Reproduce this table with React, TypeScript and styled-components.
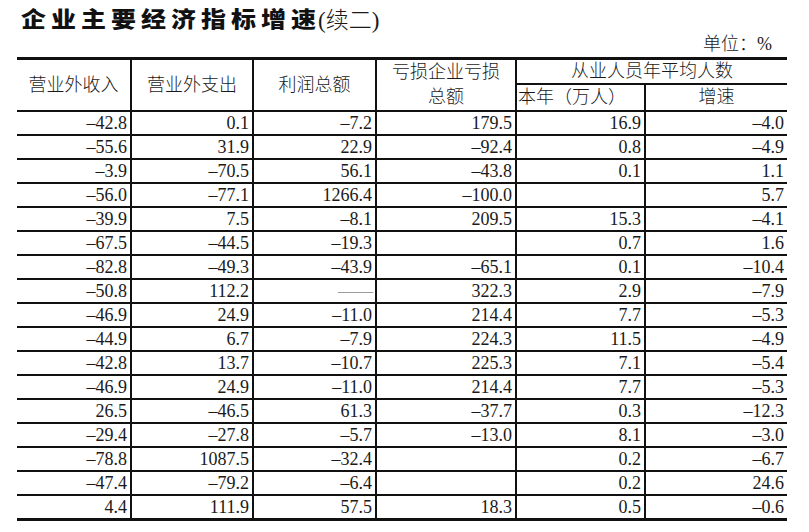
import React from "react";
import styled, { createGlobalStyle } from "styled-components";

const GlobalStyle = createGlobalStyle`
  html, body {
    margin: 0;
    padding: 0;
    background: #fff;
  }
  body {
    font-family: "Liberation Serif", "Noto Sans CJK SC", serif;
    color: #1a1a1a;
  }
`;

type Cell = string;

const rows: Cell[][] = [
  ["–42.8", "0.1", "–7.2", "179.5", "16.9", "–4.0"],
  ["–55.6", "31.9", "22.9", "–92.4", "0.8", "–4.9"],
  ["–3.9", "–70.5", "56.1", "–43.8", "0.1", "1.1"],
  ["–56.0", "–77.1", "1266.4", "–100.0", "", "5.7"],
  ["–39.9", "7.5", "–8.1", "209.5", "15.3", "–4.1"],
  ["–67.5", "–44.5", "–19.3", "", "0.7", "1.6"],
  ["–82.8", "–49.3", "–43.9", "–65.1", "0.1", "–10.4"],
  ["–50.8", "112.2", "——", "322.3", "2.9", "–7.9"],
  ["–46.9", "24.9", "–11.0", "214.4", "7.7", "–5.3"],
  ["–44.9", "6.7", "–7.9", "224.3", "11.5", "–4.9"],
  ["–42.8", "13.7", "–10.7", "225.3", "7.1", "–5.4"],
  ["–46.9", "24.9", "–11.0", "214.4", "7.7", "–5.3"],
  ["26.5", "–46.5", "61.3", "–37.7", "0.3", "–12.3"],
  ["–29.4", "–27.8", "–5.7", "–13.0", "8.1", "–3.0"],
  ["–78.8", "1087.5", "–32.4", "", "0.2", "–6.7"],
  ["–47.4", "–79.2", "–6.4", "", "0.2", "24.6"],
  ["4.4", "111.9", "57.5", "18.3", "0.5", "–0.6"],
];

const colWidths = [115, 122, 123, 140, 129, 141];

export default function App() {
  return (
    <Page>
      <GlobalStyle />
      <Title>
        <TitleMain>企业主要经济指标增速</TitleMain>
        <TitleNote>(续二)</TitleNote>
      </Title>
      <Unit>单位：%</Unit>
      <Table>
        <colgroup>
          {colWidths.map((w, i) => (
            <col key={i} style={{ width: w }} />
          ))}
        </colgroup>
        <thead>
          <HeadRow $h={23}>
            <HeadCell rowSpan={2}>营业外收入</HeadCell>
            <HeadCell rowSpan={2}>营业外支出</HeadCell>
            <HeadCell rowSpan={2}>利润总额</HeadCell>
            <HeadCell rowSpan={2} $twoLine>
              亏损企业亏损
              <br />
              总额
            </HeadCell>
            <HeadCell colSpan={2} $last>
              从业人员年平均人数
            </HeadCell>
          </HeadRow>
          <HeadRow $h={26}>
            <HeadCell $sub>本年（万人）</HeadCell>
            <HeadCell $last>增速</HeadCell>
          </HeadRow>
        </thead>
        <tbody>
          {rows.map((r, i) => (
            <DataRow key={i} $end={i === rows.length - 1}>
              {r.map((c, j) => (
                <DataCell key={j} $last={j === r.length - 1}>
                  {c === "——" ? <Dash>——</Dash> : c}
                </DataCell>
              ))}
            </DataRow>
          ))}
        </tbody>
      </Table>
    </Page>
  );
}

const Page = styled.div`
  width: 809px;
  height: 532px;
  padding: 0 0 0 17px;
  box-sizing: border-box;
`;

const Title = styled.div`
  height: 32px;
  line-height: 34px;
  padding-left: 4px;
  white-space: nowrap;
`;

const TitleMain = styled.span`
  display: inline-block;
  font-family: "Noto Sans CJK SC", sans-serif;
  font-weight: 900;
  font-size: 25px;
  letter-spacing: 5px;
  color: #111;
  transform: scaleY(0.86);
  transform-origin: 50% 55%;
`;

const TitleNote = styled.span`
  font-family: "Liberation Serif", "Noto Sans CJK SC", serif;
  font-size: 23px;
  font-weight: 300;
  margin-left: -3px;
`;

const Unit = styled.div`
  width: 770px;
  height: 22px;
  margin-top: 1px;
  padding-right: 15px;
  box-sizing: border-box;
  text-align: right;
  font-size: 18px;
  line-height: 22px;
  font-family: "Liberation Serif", "Noto Sans CJK SC", serif;
  font-weight: 300;
`;

const Table = styled.table`
  margin-top: 2px;
  width: 770px;
  table-layout: fixed;
  border-collapse: separate;
  border-spacing: 0;
  border-top: 3px solid #111;
`;

const HeadRow = styled.tr<{ $h: number }>`
  height: ${(p) => p.$h}px;
`;

const HeadCell = styled.th<{ $last?: boolean; $sub?: boolean; $twoLine?: boolean }>`
  padding: 0;
  font-weight: 300;
  font-size: 18px;
  line-height: ${(p) => (p.$twoLine ? "25px" : "22px")};
  text-align: ${(p) => (p.$sub ? "left" : "center")};
  vertical-align: ${(p) => (p.$twoLine ? "top" : "middle")};
  padding-left: ${(p) => (p.$sub ? "1px" : "0")};
  white-space: nowrap;
  color: #1a1a1a;
  border-bottom: 2px solid #111;
  border-right: ${(p) => (p.$last ? "none" : "2px solid #111")};
  font-family: "Liberation Serif", "Noto Sans CJK SC", serif;
`;

const DataRow = styled.tr<{ $end?: boolean }>`
  height: ${(p) => (p.$end ? 25 : 24)}px;
  & > td {
    border-bottom: ${(p) => (p.$end ? "3px" : "2px")} solid #111;
  }
`;

const DataCell = styled.td<{ $last?: boolean }>`
  padding: 0 3px 0 0;
  text-align: right;
  vertical-align: middle;
  font-size: 18px;
  line-height: 22px;
  white-space: nowrap;
  border-right: ${(p) => (p.$last ? "none" : "2px solid #111")};
`;

const Dash = styled.span`
  color: #9a9a9a;
  letter-spacing: -1px;
`;
